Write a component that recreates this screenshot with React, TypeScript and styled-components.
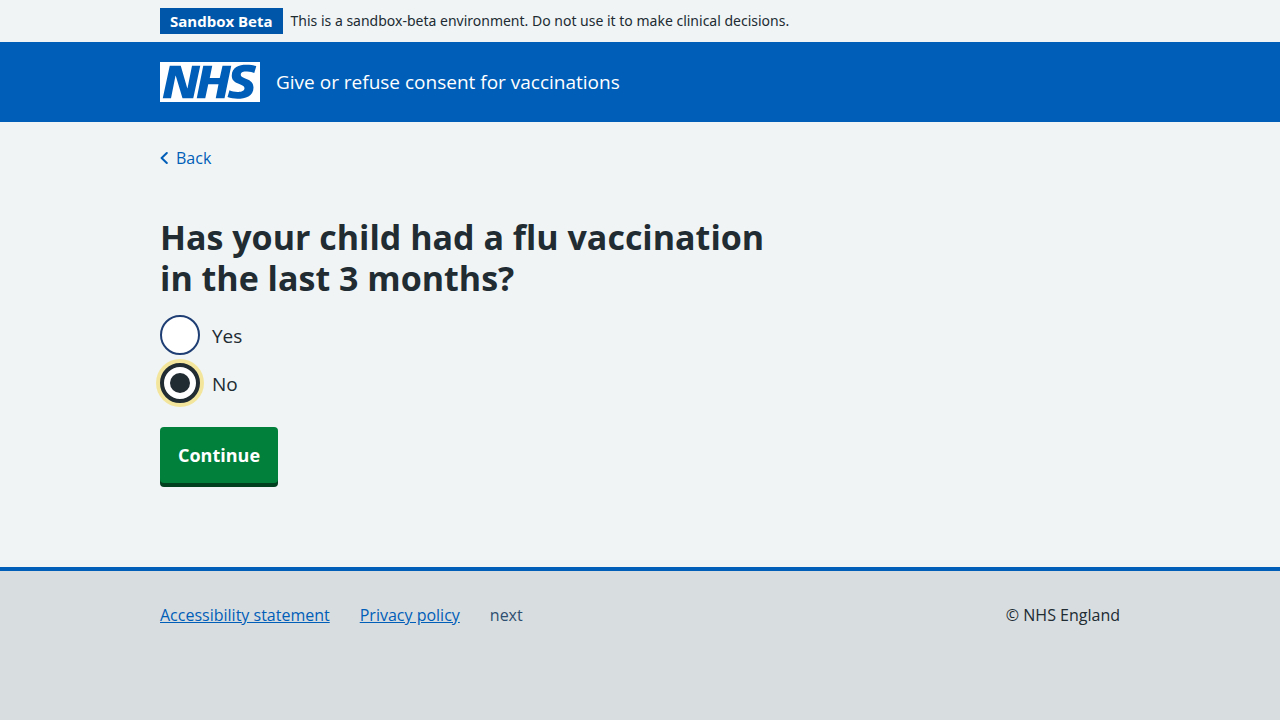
import React, { useState } from "react";
import styled, { createGlobalStyle } from "styled-components";

const color = {
  blue: "#005eb8",
  tagBlue: "#0056a8",
  text: "#212b32",
  page: "#f0f4f5",
  footer: "#d8dde0",
  green: "#00803a",
  greenShadow: "#00401e",
  focus: "#f3e69c",
};

const GlobalStyle = createGlobalStyle`
  *, *::before, *::after { box-sizing: border-box; }
  html { background: ${color.footer}; }
  body {
    margin: 0;
    color: ${color.text};
    font-family: "Open Sans", "Noto Sans", sans-serif;
    font-size: 16px;
    line-height: 24px;
  }
`;

const Container = styled.div`
  max-width: 992px;
  margin: 0 auto;
  padding: 0 16px;
`;

const PhaseBanner = styled.div`
  background: ${color.page};
  padding: 8px 0;
`;

const PhaseContent = styled(Container)`
  display: flex;
  align-items: center;
  gap: 8px;
`;

const PhaseTag = styled.strong`
  flex: none;
  padding: 1px 10px;
  background: ${color.tagBlue};
  color: #fff;
  font-size: 15px;
  font-weight: 700;
`;

const PhaseText = styled.span`
  font-family: "Noto Sans", "Open Sans", sans-serif;
  font-size: 14px;
`;

const Header = styled.header`
  background: ${color.blue};
  color: #fff;
  padding: 20px 0;
`;

const HeaderContent = styled(Container)`
  display: flex;
  align-items: center;
  gap: 16px;
`;

const Logo = styled.svg`
  display: block;
  flex: none;
  width: 100px;
  height: 40px;
`;

const ServiceName = styled.a`
  color: #fff;
  font-size: 19px;
  text-decoration: none;
`;

const Page = styled.div`
  background: ${color.page};
  padding: 24px 0 80px;
`;

const BackLink = styled.a`
  display: inline-flex;
  align-items: center;
  gap: 8px;
  color: ${color.blue};
  text-decoration: none;
`;

const Main = styled.main`
  max-width: 630px;
  padding-top: 46px;
`;

const Fieldset = styled.fieldset`
  min-width: 0;
  margin: 0 0 24px;
  padding: 0;
  border: 0;
`;

const Legend = styled.legend`
  padding: 0;
  margin-bottom: 16px;
`;

const Heading = styled.h1`
  margin: 0;
  font-size: 34px;
  line-height: 41px;
  font-weight: 700;
`;

const Options = styled.div`
  display: grid;
  gap: 8px;
`;

const Option = styled.div`
  display: flex;
  align-items: center;
`;

const OptionLabel = styled.label`
  padding: 9px 12px 7px;
  font-size: 19px;
`;

const Radio = styled.input`
  appearance: none;
  display: grid;
  place-items: center;
  flex: none;
  width: 40px;
  height: 40px;
  margin: 0;
  border: 2px solid #1f3f74;
  border-radius: 50%;
  background: #fff;
  outline: none;

  &:checked {
    border: 4px solid ${color.text};
    box-shadow: 0 0 0 4px ${color.focus};
  }

  &:checked::before {
    content: "";
    width: 20px;
    height: 20px;
    border-radius: 50%;
    background: ${color.text};
  }
`;

const Button = styled.button`
  display: block;
  margin: 0 0 4px;
  padding: 16px 18px;
  border: 0;
  border-radius: 4px;
  background: ${color.green};
  box-shadow: 0 4px 0 ${color.greenShadow};
  color: #fff;
  font: inherit;
  font-size: 18px;
  font-weight: 700;
  cursor: pointer;
`;

const Footer = styled.footer`
  border-top: 4px solid ${color.blue};
  background: ${color.footer};
  padding: 32px 0;
`;

const FooterContent = styled(Container)`
  display: flex;
  justify-content: space-between;
  gap: 32px;
`;

const FooterLinks = styled.nav`
  display: flex;
  flex-wrap: wrap;
  gap: 8px 30px;
`;

const FooterLink = styled.a<{ $plain?: boolean }>`
  color: ${(p) => (p.$plain ? "#2f4f70" : color.blue)};
  text-decoration: ${(p) => (p.$plain ? "none" : "underline")};
`;

const answers = [
  { value: "yes", label: "Yes" },
  { value: "no", label: "No" },
];

export default function App() {
  const [answer, setAnswer] = useState("no");

  return (
    <>
      <GlobalStyle />
      <PhaseBanner>
        <PhaseContent>
          <PhaseTag>Sandbox Beta</PhaseTag>
          <PhaseText>
            This is a sandbox-beta environment. Do not use it to make clinical decisions.
          </PhaseText>
        </PhaseContent>
      </PhaseBanner>
      <Header>
        <HeaderContent>
          <Logo viewBox="0 0 40 16" role="img" aria-label="NHS">
            <path fill="#fff" d="M0 0h40v16H0z" />
            <path
              fill={color.blue}
              d="M3.9 1.5h4.4l2.6 9h.1l1.8-9h3.3l-2.8 13H9l-2.7-9h-.1l-1.8 9H1.1M17.3 1.5h3.6l-1 4.9h4L25 1.5h3.5l-2.7 13h-3.5l1.1-5.6h-4.1l-1.2 5.6h-3.4M37.7 4.4c-.7-.3-1.6-.6-2.9-.6-1.4 0-2.5.2-2.5 1.3 0 1.8 5.1 1.2 5.1 5.1 0 3.6-3.3 4.5-6.4 4.5-1.3 0-2.9-.3-4-.7l.8-2.7c.7.4 2.1.7 3.2.7s2.8-.2 2.8-1.5c0-2.1-5.1-1.3-5.1-5 0-3.4 2.9-4.4 5.8-4.4 1.6 0 3.1.2 4 .6"
            />
          </Logo>
          <ServiceName href="#">Give or refuse consent for vaccinations</ServiceName>
        </HeaderContent>
      </Header>
      <Page>
        <Container>
          <BackLink href="#">
            <svg width="8" height="14" viewBox="0 0 8 14" fill="none" aria-hidden="true">
              <path
                d="M6.8 2 1.6 7l5.2 5"
                stroke={color.blue}
                strokeWidth="2"
                strokeLinecap="round"
                strokeLinejoin="round"
              />
            </svg>
            Back
          </BackLink>
          <Main>
            <form onSubmit={(e) => e.preventDefault()}>
              <Fieldset>
                <Legend>
                  <Heading>Has your child had a flu vaccination in the last 3 months?</Heading>
                </Legend>
                <Options>
                  {answers.map((a) => (
                    <Option key={a.value}>
                      <Radio
                        type="radio"
                        name="vaccinated"
                        id={a.value}
                        value={a.value}
                        checked={answer === a.value}
                        onChange={() => setAnswer(a.value)}
                      />
                      <OptionLabel htmlFor={a.value}>{a.label}</OptionLabel>
                    </Option>
                  ))}
                </Options>
              </Fieldset>
              <Button type="submit">Continue</Button>
            </form>
          </Main>
        </Container>
      </Page>
      <Footer>
        <FooterContent>
          <FooterLinks>
            <FooterLink href="#">Accessibility statement</FooterLink>
            <FooterLink href="#">Privacy policy</FooterLink>
            <FooterLink href="#" $plain>
              next
            </FooterLink>
          </FooterLinks>
          <span>© NHS England</span>
        </FooterContent>
      </Footer>
    </>
  );
}
